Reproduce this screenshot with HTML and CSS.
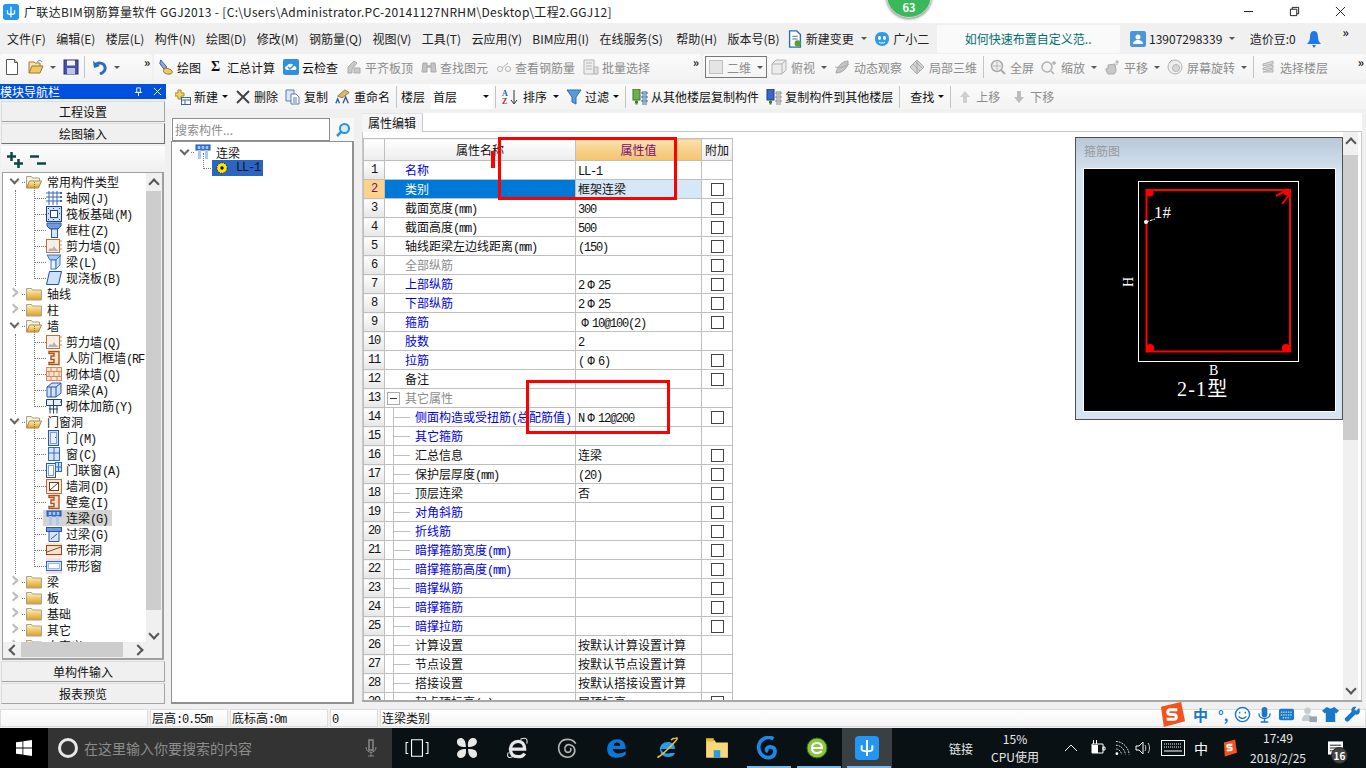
FILE: index.html
```html
<!DOCTYPE html>
<html lang="zh-CN">
<head>
<meta charset="UTF-8">
<title>广联达BIM钢筋算量软件 GGJ2013</title>
<meta name="viewport" content="width=device-width, initial-scale=1.0">
<link rel="stylesheet" href="styles.css">
</head>
<body>
<svg class="sprite" aria-hidden="true">
    <defs>
        <linearGradient id="fold" x1="0" y1="0" x2="0" y2="1"><stop offset="0" stop-color="#fff3b8"/><stop offset="1" stop-color="#dc9f22"/></linearGradient>
        <symbol id="i-folder" viewBox="0 0 16 14"><path d="M.5 3V1.5h5l1 1.5h9v10H.5z" fill="url(#fold)" stroke="#a8a090"/></symbol>
        <symbol id="i-folder-open" viewBox="0 0 16 14"><path d="M.5 13V1.5h5l1 1.5h7v3" fill="#fbf2cf" stroke="#a8a090"/><path d="M.5 13l3-7h12l-3 7z" fill="url(#fold)" stroke="#a08a50"/></symbol>
        <symbol id="i-grid" viewBox="0 0 16 16"><path d="M3 1v14M7 1v14M11 1v14M0 3h14M0 7h14M0 11h14" stroke="#3a66b8" fill="none"/><path d="M14 2h2v2h-2zM14 6h2v2h-2zM14 10h2v2h-2z" fill="#3a66b8"/></symbol>
        <symbol id="i-raft" viewBox="0 0 16 16"><rect x=".5" y=".5" width="15" height="15" fill="#cfe0f7" stroke="#1c3f86"/><rect x="4.5" y="4.5" width="7" height="7" fill="#fff" stroke="#1c3f86"/><path d="M2 2h1v1H2zM7 2h1v1H7zM13 2h1v1h-1zM2 7h1v1H2zM13 7h1v1h-1zM2 13h1v1H2zM7 13h1v1H7zM13 13h1v1h-1z" fill="#1c3f86"/></symbol>
        <symbol id="i-column" viewBox="0 0 16 16"><path d="M1 1h14v3l-3 3H4L1 4z" fill="#6f9ae0" stroke="#2b55a8"/><rect x="5.5" y="7" width="6" height="8.5" fill="#d8e6fb" stroke="#2b55a8"/></symbol>
        <symbol id="i-shear" viewBox="0 0 16 16"><rect x=".5" y="1.5" width="13" height="13" fill="#f5efe8" stroke="#c0703a"/><path d="M2 13l2-3 2 1 2-3 2 3 3 2z" fill="#b5b5b5"/><path d="M14 3h2M14 7h2M14 11h2" stroke="#e28a30"/></symbol>
        <symbol id="i-beam" viewBox="0 0 16 16"><path d="M1 1h14l-3 5H4z" fill="#a9c8f2" stroke="#3a78c8"/><path d="M5 6h5v9H5z" fill="#eaf2fd" stroke="#3a78c8"/><path d="M10 6l4-4v9l-4 4z" fill="#cfe0f7" stroke="#3a78c8"/></symbol>
        <symbol id="i-slab" viewBox="0 0 16 16"><path d="M3.5 1.5h12l-3 13H.5z" fill="#cfe2fb" stroke="#1d4fa8"/></symbol>
        <symbol id="i-jamb" viewBox="0 0 16 16"><path d="M3 1.5h10v13H3v-2h5v-3H5V6h3V3.500H3z" fill="#fbe3c8" stroke="#a85420" stroke-width="1.400"/></symbol>
        <symbol id="i-brick" viewBox="0 0 16 16"><rect x=".5" y="1.500" width="15" height="13" fill="#fbe6d6" stroke="#d98a58"/><path d="M.5 5.500h15M.5 10.500h15M5 1.500v4M11 1.500v4M3 5.500v5M8 5.500v5M13 5.500v5M5 10.500v4M11 10.500v4" stroke="#d98a58" fill="none"/></symbol>
        <symbol id="i-dark" viewBox="0 0 16 16"><path d="M1 5l5-4h9v10l-5 4H1z" fill="#cfe0f7" stroke="#2b55a8"/><path d="M1 5h9v10M10 5l5-4M5 5v10" stroke="#2b55a8" fill="none"/></symbol>
        <symbol id="i-rebar" viewBox="0 0 16 16"><path d="M.5 1.500h15v6H.5z" fill="#e6effc" stroke="#1c3f86"/><path d="M4 7.500h7v8M4 7.500v8M7.500 1.500v14M3 11h9M14 4h2" stroke="#1c3f86" fill="none"/></symbol>
        <symbol id="i-door" viewBox="0 0 16 16"><rect x="2.500" y=".5" width="10" height="15" fill="#cfe0f7" stroke="#2b55a8"/><rect x="4.500" y="2.500" width="6" height="11" fill="#eaf2fd" stroke="#7aa0e0"/><path d="M9 7h1v1H9z" fill="#1c3f86"/></symbol>
        <symbol id="i-window" viewBox="0 0 16 16"><rect x="2.500" y="1.500" width="11" height="13" fill="#d8e6fb" stroke="#2b6cd0"/><path d="M8 1.500v13M2.500 7h11" stroke="#2b6cd0"/></symbol>
        <symbol id="i-doorwin" viewBox="0 0 16 16"><rect x=".5" y="1.500" width="9" height="14" fill="#eaf2fd" stroke="#2b55a8"/><rect x="2.500" y="3.500" width="5" height="10" fill="#fff" stroke="#7aa0e0"/><rect x="9.500" y=".5" width="6" height="9" fill="#cfe0f7" stroke="#2b6cd0"/><path d="M12.500.5v9M9.500 5h6" stroke="#2b6cd0"/></symbol>
        <symbol id="i-hole" viewBox="0 0 16 16"><rect x=".5" y="1.500" width="15" height="14" fill="#f9e8dc" stroke="#c0703a"/><rect x="3.500" y="4.500" width="9" height="8" fill="#fff" stroke="#704020"/><path d="M4 12l8-7" stroke="#704020"/></symbol>
        <symbol id="i-link" viewBox="0 0 16 16"><rect x="1" y="1" width="14" height="5" fill="#4a86e0" stroke="#1d4fa8"/><path d="M3 6h3v9H3zM10 6h3v9h-3z" fill="#a9c8f2"/><path d="M4 2v3M8 2v3M12 2v3" stroke="#fff"/></symbol>
        <symbol id="i-lintel" viewBox="0 0 16 16"><rect x=".5" y="1.500" width="15" height="4" fill="#6f9ae0" stroke="#2b55a8"/><path d="M3 5.500h10v10H3z" fill="#d8e6fb" stroke="#2b55a8"/><path d="M5 13l6-5" stroke="#2b55a8"/></symbol>
        <symbol id="i-bandhole" viewBox="0 0 16 16"><rect y="1" width="16" height="14" fill="#fbe3d6"/><rect x=".5" y="3.500" width="15" height="9" fill="#f4e2cc" stroke="#8a4a20"/><path d="M1 10l14-5" stroke="#8a4a20"/></symbol>
        <symbol id="i-bandwin" viewBox="0 0 16 16"><rect width="16" height="16" fill="#fbdcd6"/><rect x=".5" y="3.500" width="15" height="9" fill="#d8e6fb" stroke="#2b6cd0"/><rect x="2.500" y="5.500" width="11" height="5" fill="#fff" stroke="#9ab8e8"/></symbol>
        <symbol id="i-new" viewBox="0 0 16 16"><path d="M2.500.5h8l3 3v12h-11z" fill="#fff" stroke="#555"/><path d="M10.500.5v3h3" fill="#ddd" stroke="#555"/></symbol>
        <symbol id="i-open" viewBox="0 0 16 16"><path d="M1 14V3h5l1 1h5v3" fill="#f6e2a6" stroke="#9a8040"/><path d="M1 14l3-7h11l-3 7z" fill="#f0c860" stroke="#9a7a30"/><path d="M9 3c2-2 4-2 5 0" fill="none" stroke="#3a78c8"/></symbol>
        <symbol id="i-save" viewBox="0 0 16 16"><rect x="1" y="1" width="14" height="14" fill="#4a52a8" stroke="#2a2f70"/><rect x="4" y="1.500" width="8" height="5" fill="#f4f4f4"/><rect x="4" y="9" width="8" height="6" fill="#bcc4e8"/></symbol>
        <symbol id="i-undo" viewBox="0 0 16 16"><path d="M3 7c2-4 9-4 10 1s-3 6-5 7" fill="none" stroke="#2b6cb8" stroke-width="3"/><path d="M1 2l1 7 6-2z" fill="#2b6cb8"/></symbol>
        <symbol id="i-draw" viewBox="0 0 18 18"><path d="M3 1l7 8-3 3-5-7z" fill="#8aa8d8" stroke="#36568c"/><path d="M8 10c3 1 7 1 8 4s-5 4-8 2-2-4 0-6z" fill="#f0c860" stroke="#7a6a30"/></symbol>
        <symbol id="i-cloud" viewBox="0 0 16 16"><rect width="16" height="16" rx="2" fill="#2f8fe0"/><path d="M4 11c-3-1-2-4 0-4 1-3 6-3 7 0 3 0 3 4 1 4z" fill="#fff"/><path d="M5 8l2 2 4-4" fill="none" stroke="#2f8fe0" stroke-width="1.500"/></symbol>
        <symbol id="i-level" viewBox="0 0 16 16"><path d="M2 14V8l6-6 3 2-5 6v4zM8 14V9h6v5z" fill="#c8c8c8" stroke="#aaa"/></symbol>
        <symbol id="i-binoc" viewBox="0 0 16 16"><path d="M2 4h4v9H1zM10 4h4l1 9h-5z" fill="#c4c4c4" stroke="#a8a8a8"/><path d="M6 6h4v3H6z" fill="#b8b8b8"/></symbol>
        <symbol id="i-look" viewBox="0 0 16 16"><circle cx="4" cy="10" r="2.500" fill="none" stroke="#b0b0b0"/><circle cx="12" cy="10" r="2.500" fill="none" stroke="#b0b0b0"/><path d="M6 9l6-5" stroke="#b0b0b0"/></symbol>
        <symbol id="i-batch" viewBox="0 0 16 16"><path d="M1 1h10v14H1z" fill="#eee" stroke="#b4b4b4"/><path d="M3 4h6M3 7h6M3 10h6M11 8h4v7h-4z" fill="#ddd" stroke="#b4b4b4"/></symbol>
        <symbol id="i-box" viewBox="0 0 16 16"><path d="M1 5l4-4h10v10l-4 4H1z" fill="#ececec" stroke="#b4b4b4"/><path d="M1 5h10v10M11 5l4-4" fill="none" stroke="#b4b4b4"/></symbol>
        <symbol id="i-orbit" viewBox="0 0 16 16"><path d="M2 14C3 8 8 2 14 2c1 6-5 12-12 12z" fill="#c4c4c4" stroke="#a8a8a8"/><path d="M1 8c4 1 9 1 14-3" fill="none" stroke="#aaa"/></symbol>
        <symbol id="i-local" viewBox="0 0 16 16"><path d="M1 8l7-7 7 7-7 7z" fill="#d4d4d4" stroke="#aaa"/><path d="M4 5l7 7M7 3l7 7M8 1v14" stroke="#aaa" fill="none"/></symbol>
        <symbol id="i-full" viewBox="0 0 16 16"><circle cx="7" cy="7" r="5.500" fill="#f0f0f0" stroke="#aaa" stroke-width="1.500"/><path d="M11 11l4 4" stroke="#aaa" stroke-width="2"/><path d="M7 3v8M3 7h8" stroke="#b8b8b8"/></symbol>
        <symbol id="i-zoom" viewBox="0 0 16 16"><circle cx="6" cy="8" r="5" fill="#f4f4f4" stroke="#b0b0b0" stroke-width="1.500"/><path d="M10 12l3 3M13 2v4M11 4h4" stroke="#b0b0b0" stroke-width="1.500"/></symbol>
        <symbol id="i-pan" viewBox="0 0 16 16"><path d="M4 15c-2-3-3-5-1-6l1 1V6l7-1 1 6c0 2-1 3-2 4z" fill="#c8c8c8" stroke="#aaa"/><path d="M13 1v5M11 3h4" stroke="#aaa"/></symbol>
        <symbol id="i-rotate" viewBox="0 0 16 16"><circle cx="8" cy="8" r="7" fill="#eee" stroke="#b4b4b4"/><circle cx="9" cy="9" r="3.500" fill="#d8d8d8" stroke="#b4b4b4"/><path d="M2 4l3-3" stroke="#a0a0a0"/></symbol>
        <symbol id="i-floor" viewBox="0 0 16 16"><path d="M3 5l10-3v3L3 7zM3 9l10-3v3L3 11zM3 13l10-3v3z" fill="#d8d8d8" stroke="#b4b4b4"/></symbol>
        <symbol id="i-add" viewBox="0 0 16 16"><path d="M3 1h3v3h3v3H6v3H3V7H0V4h3z" fill="#f2d660" stroke="#a08a30"/><rect x="6.500" y="8.500" width="9" height="7" fill="#fff" stroke="#3a66a8"/><path d="M6.500 11h9M10 11v4.500" stroke="#3a66a8"/></symbol>
        <symbol id="i-del" viewBox="0 0 16 16"><path d="M2 2l12 12M14 2L2 14" stroke="#444" stroke-width="2"/></symbol>
        <symbol id="i-copy" viewBox="0 0 16 16"><path d="M1 1h8v11H1z" fill="#dce8f8" stroke="#5a7ab0"/><path d="M6 5h5l3 3v7H6z" fill="#fff" stroke="#5a7ab0"/><path d="M8 9h4M8 11h4M8 13h4" stroke="#5a7ab0"/></symbol>
        <symbol id="i-rename" viewBox="0 0 18 18"><path d="M3 8l8-7 5 3-8 6z" fill="#d8b860" stroke="#8a7a40"/><path d="M1 16l2-5 2 5M9 16l3-7 3 7" fill="none" stroke="#2b55a8" stroke-width="1.500"/></symbol>
        <symbol id="i-sort" viewBox="0 0 16 16"><text x="0" y="7" class="sort-a">A</text><text x="0" y="15" class="sort-z">Z</text><path d="M12 1v13M9 11l3 4 3-4" fill="none" stroke="#333"/></symbol>
        <symbol id="i-filter" viewBox="0 0 16 16"><path d="M1 1h14L10 8v7l-4-2V8z" fill="#5a9be0" stroke="#2b6cb8"/></symbol>
        <symbol id="i-from" viewBox="0 0 16 16"><rect x="1" y="0" width="7" height="11" fill="#6fb04a" stroke="#3a7a20"/><path d="M3 13h3M4.500 11.500v4" stroke="#2b8a20" stroke-width="2"/><path d="M10 3h5v2h-5zM10 7h5v2h-5zM10 11h5v2h-5zM10 15h5" stroke="#3a66a8" fill="#cfe0f7"/></symbol>
        <symbol id="i-to" viewBox="0 0 16 16"><rect x="1" y="0" width="7" height="11" fill="#3a66c8" stroke="#1d3f88"/><path d="M3 13h3M4.500 11.500v4" stroke="#2b8a20" stroke-width="2"/><path d="M10 3h5v2h-5zM10 7h5v2h-5zM10 11h5v2h-5zM10 15h5" stroke="#888" fill="#eee"/></symbol>
        <symbol id="i-up" viewBox="0 0 16 16"><path d="M8 2l5 6h-3v6H6V8H3z" fill="#cfcfcf"/></symbol>
        <symbol id="i-down" viewBox="0 0 16 16"><path d="M8 14l5-6h-3V2H6v6H3z" fill="#bdbdbd"/></symbol>
        <symbol id="i-doc" viewBox="0 0 16 20"><path d="M2 1h8l4 4v14H2z" fill="#fff" stroke="#2b6cb8" stroke-width="1.500"/><path d="M5 7h6M5 10h6" stroke="#2b6cb8"/><circle cx="11" cy="15" r="3.500" fill="#5aa02c"/></symbol>
        <symbol id="i-bot" viewBox="0 0 16 16"><path d="M8 1c5 0 7 3 7 7s-3 7-7 7-7-3-7-7 2-7 7-7z" fill="#2f9be8"/><ellipse cx="5.500" cy="7" rx="1.500" ry="2" fill="#fff"/><ellipse cx="10.500" cy="7" rx="1.500" ry="2" fill="#fff"/><path d="M5 11c2 1.500 4 1.500 6 0" stroke="#fff" fill="none"/></symbol>
        <symbol id="i-user" viewBox="0 0 16 16"><rect width="16" height="16" rx="2" fill="#4a96d8"/><circle cx="8" cy="6" r="2.500" fill="#fff"/><path d="M3 13c0-3 3-4 5-4s5 1 5 4z" fill="#fff"/></symbol>
        <symbol id="i-bell" viewBox="0 0 16 18"><path d="M8 1c3 0 4 3 4 6s1 5 3 7H1c2-2 3-4 3-7s1-6 4-6z" fill="#1e78e8"/><path d="M6 15h4l-2 3z" fill="#1e78e8"/></symbol>
        <symbol id="i-app" viewBox="0 0 18 18"><rect width="18" height="18" rx="3" fill="#2196f3"/><path d="M9 3v12M5 7v3c0 2 8 2 8 0V7" fill="none" stroke="#fff" stroke-width="1.500"/></symbol>
        <symbol id="i-find" viewBox="0 0 16 16"><circle cx="9.500" cy="6.500" r="4.500" fill="#d8ecfb" stroke="#2f8fe0" stroke-width="2"/><path d="M6 10l-4 4" stroke="#2f8fe0" stroke-width="2.500"/></symbol>
        <symbol id="i-element" viewBox="0 0 14 14"><circle cx="7" cy="7" r="6" fill="#ffe800" stroke="#111" stroke-dasharray="1.500 1.500"/><circle cx="7" cy="7" r="2" fill="#111"/></symbol>
    </defs>
</svg>

<div class="titlebar">
    <svg class="ic-app" viewBox="0 0 18 18"><use href="#i-app"/></svg>
    <span class="title-text">广联达BIM钢筋算量软件 GGJ2013 - [C:\Users\Administrator.PC-20141127NRHM\Desktop\工程2.GGJ12]</span>
    <div class="win-btns">
        <svg viewBox="0 0 12 12"><path d="M1 6h10" stroke="#111"/></svg>
        <svg viewBox="0 0 12 12"><path d="M1.500 3.500h7v7h-7zM3.500 3.500v-2h7v7h-2" fill="none" stroke="#111"/></svg>
        <svg viewBox="0 0 12 12"><path d="M1 1l10 10M11 1L1 11" stroke="#111"/></svg>
    </div>
</div>

<div class="menubar">
    <span>文件(F)</span><span>编辑(E)</span><span>楼层(L)</span><span>构件(N)</span><span>绘图(D)</span><span>修改(M)</span><span>钢筋量(Q)</span><span>视图(V)</span><span>工具(T)</span><span>云应用(Y)</span><span>BIM应用(I)</span><span>在线服务(S)</span><span class="menu-help">帮助(H)</span><span>版本号(B)</span>
    <span class="menu-tool menu-change"><svg class="ic" viewBox="0 0 16 20"><use href="#i-doc"/></svg>新建变更<i class="caret"></i></span>
    <span class="menu-tool menu-bot"><svg class="ic" viewBox="0 0 16 16"><use href="#i-bot"/></svg>广小二</span>
    <span class="banner">如何快速布置自定义范..</span>
    <span class="menu-tool user"><svg class="ic" viewBox="0 0 16 16"><use href="#i-user"/></svg>13907298339<i class="caret"></i></span>
    <span class="beans">造价豆:0</span>
    <svg class="ic bell" viewBox="0 0 16 18"><use href="#i-bell"/></svg>
    <b class="more">»</b>
</div>

<div class="toolbar">
    <div class="tb-sec sec-file">
        <svg class="ic"><use href="#i-new"/></svg>
        <svg class="ic"><use href="#i-open"/></svg><i class="caret"></i>
        <svg class="ic"><use href="#i-save"/></svg>
        <i class="sep"></i>
        <svg class="ic"><use href="#i-undo"/></svg><i class="caret"></i>
        <b class="more">»</b>
    </div>
    <div class="tb-sec sec-draw">
        <span class="tool"><svg class="ic"><use href="#i-draw"/></svg>绘图</span>
        <span class="tool"><b class="sigma">Σ</b>汇总计算</span>
        <span class="tool"><svg class="ic"><use href="#i-cloud"/></svg>云检查</span>
        <span class="tool off"><svg class="ic"><use href="#i-level"/></svg>平齐板顶</span>
        <span class="tool off"><svg class="ic"><use href="#i-binoc"/></svg>查找图元</span>
        <span class="tool off"><svg class="ic"><use href="#i-look"/></svg>查看钢筋量</span>
        <span class="tool off"><svg class="ic"><use href="#i-batch"/></svg>批量选择</span>
        <b class="more">»</b>
    </div>
    <div class="tb-sec sec-view">
        <span class="tool off view-box"><i class="view-sq"></i>二维<i class="caret"></i></span>
        <span class="tool off"><svg class="ic"><use href="#i-box"/></svg>俯视<i class="caret"></i></span>
        <span class="tool off"><svg class="ic"><use href="#i-orbit"/></svg>动态观察</span>
        <span class="tool off"><svg class="ic"><use href="#i-local"/></svg>局部三维</span>
        <i class="sep"></i>
        <span class="tool off"><svg class="ic"><use href="#i-full"/></svg>全屏</span>
        <span class="tool off"><svg class="ic"><use href="#i-zoom"/></svg>缩放<i class="caret"></i></span>
        <span class="tool off"><svg class="ic"><use href="#i-pan"/></svg>平移<i class="caret"></i></span>
        <span class="tool off"><svg class="ic"><use href="#i-rotate"/></svg>屏幕旋转<i class="caret"></i></span>
        <i class="sep"></i>
        <span class="tool off"><svg class="ic"><use href="#i-floor"/></svg>选择楼层</span>
        <b class="more">»</b>
    </div>
</div>

<div class="workspace">
    <div class="nav">
        <div class="nav-title"><span>模块导航栏</span>
            <svg viewBox="0 0 10 10"><path d="M3 1h4v5H3zM1 6h8M5 6v4" fill="none" stroke="#fff"/></svg>
            <svg viewBox="0 0 10 10"><path d="M1 1l8 8M9 1L1 9" stroke="#fff"/></svg>
        </div>
        <div class="nav-btn first">工程设置</div>
        <div class="nav-btn active">绘图输入</div>
        <div class="nav-tools">
            <svg viewBox="0 0 16 16"><path d="M4.500 0v9M0 4.500h9M11.500 7v9M7 11.500h9" stroke="#0a4a44" stroke-width="2.500"/></svg>
            <svg viewBox="0 0 16 16"><path d="M0 4.500h9M7 11.500h9" stroke="#0a4a44" stroke-width="2.500"/></svg>
        </div>
        <div class="nav-tree">
            <div class="tree-list">
                <div class="node"><i class="exp open"></i><svg class="fold"><use href="#i-folder-open"/></svg>常用构件类型</div>
                <div class="kids">
                    <div class="kid"><svg class="ic"><use href="#i-grid"/></svg>轴网<span class="m">(J)</span></div>
                    <div class="kid"><svg class="ic"><use href="#i-raft"/></svg>筏板基础<span class="m">(M)</span></div>
                    <div class="kid"><svg class="ic"><use href="#i-column"/></svg>框柱<span class="m">(Z)</span></div>
                    <div class="kid"><svg class="ic"><use href="#i-shear"/></svg>剪力墙<span class="m">(Q)</span></div>
                    <div class="kid"><svg class="ic"><use href="#i-beam"/></svg>梁<span class="m">(L)</span></div>
                    <div class="kid"><svg class="ic"><use href="#i-slab"/></svg>现浇板<span class="m">(B)</span></div>
                </div>
                <div class="node"><i class="exp"></i><svg class="fold"><use href="#i-folder"/></svg>轴线</div>
                <div class="node"><i class="exp"></i><svg class="fold"><use href="#i-folder"/></svg>柱</div>
                <div class="node"><i class="exp open"></i><svg class="fold"><use href="#i-folder-open"/></svg>墙</div>
                <div class="kids">
                    <div class="kid"><svg class="ic"><use href="#i-shear"/></svg>剪力墙<span class="m">(Q)</span></div>
                    <div class="kid"><svg class="ic"><use href="#i-jamb"/></svg>人防门框墙<span class="m">(RF)</span></div>
                    <div class="kid"><svg class="ic"><use href="#i-brick"/></svg>砌体墙<span class="m">(Q)</span></div>
                    <div class="kid"><svg class="ic"><use href="#i-dark"/></svg>暗梁<span class="m">(A)</span></div>
                    <div class="kid"><svg class="ic"><use href="#i-rebar"/></svg>砌体加筋<span class="m">(Y)</span></div>
                </div>
                <div class="node"><i class="exp open"></i><svg class="fold"><use href="#i-folder-open"/></svg>门窗洞</div>
                <div class="kids">
                    <div class="kid"><svg class="ic"><use href="#i-door"/></svg>门<span class="m">(M)</span></div>
                    <div class="kid"><svg class="ic"><use href="#i-window"/></svg>窗<span class="m">(C)</span></div>
                    <div class="kid"><svg class="ic"><use href="#i-doorwin"/></svg>门联窗<span class="m">(A)</span></div>
                    <div class="kid"><svg class="ic"><use href="#i-hole"/></svg>墙洞<span class="m">(D)</span></div>
                    <div class="kid"><svg class="ic"><use href="#i-jamb"/></svg>壁龛<span class="m">(I)</span></div>
                    <div class="kid current"><svg class="ic"><use href="#i-link"/></svg><span class="cur-text">连梁<span class="m">(G)</span></span></div>
                    <div class="kid"><svg class="ic"><use href="#i-lintel"/></svg>过梁<span class="m">(G)</span></div>
                    <div class="kid"><svg class="ic"><use href="#i-bandhole"/></svg>带形洞</div>
                    <div class="kid"><svg class="ic"><use href="#i-bandwin"/></svg>带形窗</div>
                </div>
                <div class="node"><i class="exp"></i><svg class="fold"><use href="#i-folder"/></svg>梁</div>
                <div class="node"><i class="exp"></i><svg class="fold"><use href="#i-folder"/></svg>板</div>
                <div class="node"><i class="exp"></i><svg class="fold"><use href="#i-folder"/></svg>基础</div>
                <div class="node"><i class="exp"></i><svg class="fold"><use href="#i-folder"/></svg>其它</div>
                <div class="node"><i class="exp"></i><svg class="fold"><use href="#i-folder"/></svg>自定义</div>
            </div>
            <div class="vscroll tree-v"><i class="arr up"></i><i class="thumb"></i><i class="arr dn"></i></div>
            <div class="hscroll"><i class="arr lf"></i><i class="thumb"></i><i class="arr rt"></i></div>
        </div>
        <div class="nav-btn">单构件输入</div>
        <div class="nav-btn">报表预览</div>
    </div>

    <div class="main">
        <div class="toolbar2">
            <span class="tool"><svg class="ic"><use href="#i-add"/></svg>新建<i class="caret dark"></i></span>
            <span class="tool"><svg class="ic"><use href="#i-del"/></svg>删除</span>
            <span class="tool"><svg class="ic"><use href="#i-copy"/></svg>复制</span>
            <span class="tool"><svg class="ic"><use href="#i-rename"/></svg>重命名</span>
            <i class="sep"></i>
            <span class="floor-label">楼层</span>
            <span class="floor-combo">首层<i class="caret dark"></i></span>
            <i class="sep"></i>
            <span class="tool tool-sort"><svg class="ic"><use href="#i-sort"/></svg>排序<i class="caret dark"></i></span>
            <span class="tool"><svg class="ic"><use href="#i-filter"/></svg>过滤<i class="caret dark"></i></span>
            <i class="sep"></i>
            <span class="tool"><svg class="ic"><use href="#i-from"/></svg>从其他楼层复制构件</span>
            <span class="tool"><svg class="ic"><use href="#i-to"/></svg>复制构件到其他楼层</span>
            <i class="sep"></i>
            <span class="tool tool-find">查找<i class="caret dark"></i></span>
            <i class="sep"></i>
            <span class="tool off"><svg class="ic"><use href="#i-up"/></svg>上移</span>
            <span class="tool off tool-down"><svg class="ic"><use href="#i-down"/></svg>下移</span>
        </div>
        <div class="panes">
            <div class="tree-pane">
                <div class="search">
                    <span class="search-input">搜索构件...</span>
                    <svg class="ic" viewBox="0 0 16 16"><use href="#i-find"/></svg>
                </div>
                <div class="comp-tree">
                    <div class="comp-root"><i class="exp open"></i><svg class="ic"><use href="#i-link"/></svg>连梁</div>
                    <div class="comp-leaf"><span class="comp-sel"><svg viewBox="0 0 14 14"><use href="#i-element"/></svg><span class="m">LL-1</span></span></div>
                </div>
            </div>
            <div class="prop-pane">
                <div class="tabs"><span class="tab">属性编辑</span></div>
                <div class="prop-body">
                    <div class="prop-content">
                        <table class="prop-table">
                            <colgroup><col class="c-no"><col class="c-name"><col class="c-val"><col class="c-add"></colgroup>
                            <thead><tr><th></th><th>属性名称</th><th class="th-val">属性值</th><th>附加</th></tr></thead>
                            <tbody>
                                <tr><td class="no">1</td><td class="blue">名称</td><td><span class="m">LL-1</span></td><td></td></tr>
                                <tr class="sel"><td class="no">2</td><td class="blue">类别</td><td>框架连梁</td><td><i class="chk"></i></td></tr>
                                <tr><td class="no">3</td><td>截面宽度<span class="m">(mm)</span></td><td><span class="m">300</span></td><td><i class="chk"></i></td></tr>
                                <tr><td class="no">4</td><td>截面高度<span class="m">(mm)</span></td><td><span class="m">500</span></td><td><i class="chk"></i></td></tr>
                                <tr><td class="no">5</td><td>轴线距梁左边线距离<span class="m">(mm)</span></td><td><span class="m">(150)</span></td><td><i class="chk"></i></td></tr>
                                <tr><td class="no">6</td><td class="gray">全部纵筋</td><td></td><td><i class="chk"></i></td></tr>
                                <tr><td class="no">7</td><td class="blue">上部纵筋</td><td><span class="m">2<b class="bar">Φ</b>25</span></td><td><i class="chk"></i></td></tr>
                                <tr><td class="no">8</td><td class="blue">下部纵筋</td><td><span class="m">2<b class="bar">Φ</b>25</span></td><td><i class="chk"></i></td></tr>
                                <tr><td class="no">9</td><td class="blue">箍筋</td><td><span class="m"><b class="bar">Φ</b>10@100(2)</span></td><td><i class="chk"></i></td></tr>
                                <tr><td class="no">10</td><td class="blue">肢数</td><td><span class="m">2</span></td><td></td></tr>
                                <tr><td class="no">11</td><td class="blue">拉筋</td><td><span class="m">(<b class="bar">Φ</b>6)</span></td><td><i class="chk"></i></td></tr>
                                <tr><td class="no">12</td><td>备注</td><td></td><td><i class="chk"></i></td></tr>
                                <tr><td class="no">13</td><td class="gray group"><i class="minus"></i>其它属性</td><td></td><td></td></tr>
                                <tr><td class="no">14</td><td class="blue child">侧面构造或受扭筋<span class="m">(</span>总配筋值<span class="m">)</span></td><td><span class="m">N<b class="bar">Φ</b>12@200</span></td><td><i class="chk"></i></td></tr>
                                <tr><td class="no">15</td><td class="blue child">其它箍筋</td><td></td><td></td></tr>
                                <tr><td class="no">16</td><td class="child">汇总信息</td><td>连梁</td><td><i class="chk"></i></td></tr>
                                <tr><td class="no">17</td><td class="child">保护层厚度<span class="m">(mm)</span></td><td><span class="m">(20)</span></td><td><i class="chk"></i></td></tr>
                                <tr><td class="no">18</td><td class="child">顶层连梁</td><td>否</td><td><i class="chk"></i></td></tr>
                                <tr><td class="no">19</td><td class="blue child">对角斜筋</td><td></td><td><i class="chk"></i></td></tr>
                                <tr><td class="no">20</td><td class="blue child">折线筋</td><td></td><td><i class="chk"></i></td></tr>
                                <tr><td class="no">21</td><td class="blue child">暗撑箍筋宽度<span class="m">(mm)</span></td><td></td><td><i class="chk"></i></td></tr>
                                <tr><td class="no">22</td><td class="blue child">暗撑箍筋高度<span class="m">(mm)</span></td><td></td><td><i class="chk"></i></td></tr>
                                <tr><td class="no">23</td><td class="blue child">暗撑纵筋</td><td></td><td><i class="chk"></i></td></tr>
                                <tr><td class="no">24</td><td class="blue child">暗撑箍筋</td><td></td><td><i class="chk"></i></td></tr>
                                <tr><td class="no">25</td><td class="blue child">暗撑拉筋</td><td></td><td><i class="chk"></i></td></tr>
                                <tr><td class="no">26</td><td class="child">计算设置</td><td>按默认计算设置计算</td><td></td></tr>
                                <tr><td class="no">27</td><td class="child">节点设置</td><td>按默认节点设置计算</td><td></td></tr>
                                <tr><td class="no">28</td><td class="child">搭接设置</td><td>按默认搭接设置计算</td><td></td></tr>
                                <tr><td class="no">29</td><td class="child">起点顶标高<span class="m">(m)</span></td><td>层顶标高</td><td><i class="chk"></i></td></tr>
                            </tbody>
                        </table>
                        <div class="stirrup">
                            <div class="stirrup-title">箍筋图</div>
                            <svg class="stirrup-draw" viewBox="0 0 251 242">
                                <rect width="251" height="242" fill="#000"/>
                                <rect x="54.500" y="12.500" width="160" height="180" fill="none" stroke="#fff"/>
                                <rect x="62.500" y="21" width="143.500" height="161.500" fill="none" stroke="#f00" stroke-width="2"/>
                                <circle cx="66" cy="24" r="3.500" fill="#f00"/>
                                <circle cx="66" cy="179" r="4" fill="#f00"/>
                                <circle cx="202" cy="179" r="4" fill="#f00"/>
                                <circle cx="203" cy="23" r="3.500" fill="#f00"/>
                                <path d="M203 21L192 27M205 26L198 35" fill="none" stroke="#f00" stroke-width="2"/>
                                <path d="M62 53l9-3" stroke="#fff" stroke-dasharray="3 1"/>
                                <circle cx="62" cy="53" r="2" fill="#fff"/>
                                <text x="70" y="49" class="draw-text big">1#</text>
                                <text x="0" y="0" class="draw-text" transform="translate(49 118) rotate(-90)">H</text>
                                <text x="125" y="206" class="draw-text">B</text>
                                <text x="93" y="227" class="draw-title">2-1型</text>
                            </svg>
                        </div>
                    </div>
                    <div class="vscroll prop-v"><i class="arr up"></i><i class="thumb"></i><i class="arr dn"></i></div>
                </div>
            </div>
        </div>
    </div>
</div>

<div class="statusbar">
    <div class="cell c1"></div>
    <div class="cell c2">层高<span class="m">:0.55m</span></div>
    <div class="cell c3">底标高<span class="m">:0m</span></div>
    <div class="cell c4"><span class="m">0</span></div>
    <div class="cell c5">连梁类别</div>
</div>

<div class="taskbar">
    <div class="start"><svg viewBox="0 0 16 16"><path d="M0 2.300L6.500 1.400v6.200H0zM7.300 1.300L16 0v7.600H7.300zM0 8.400h6.500v6.200L0 13.700zM7.300 8.400H16V16l-8.700-1.300z" fill="#fff"/></svg></div>
    <div class="task-search">
        <svg class="cortana" viewBox="0 0 22 22"><circle cx="11" cy="11" r="8.500" fill="none" stroke="#e8e8e8" stroke-width="3"/></svg>
        <span>在这里输入你要搜索的内容</span>
        <svg class="task-mic" viewBox="0 0 12 18"><path d="M4 1h4v10H4z" fill="none" stroke="#8a8a8a" stroke-width="1.500"/><path d="M1 8c0 7 10 7 10 0M6 13v4M3 17h6" fill="none" stroke="#8a8a8a"/></svg>
    </div>
    <div class="task-apps">
        <div class="task"><svg viewBox="0 0 22 18"><path d="M6 1.500h10v15H6zM3 4H1v10h2M19 4h2v10h-2" fill="none" stroke="#fff"/></svg></div>
        <div class="task"><svg viewBox="0 0 22 22"><path d="M10 10C3 11 1 7 2 4s8-4 8 6zM12 10c-1-7 3-9 6-8s4 8-6 8zM12 12c7-1 9 3 8 6s-8 4-8-6zM10 12c1 7-3 9-6 8s-4-8 6-8z" fill="#e8e8e8"/></svg></div>
        <div class="task"><svg viewBox="0 0 22 22"><path d="M4 12h14c0-5-3-7-6-7-4 0-7 3-7 7 0 5 3 7 7 7 3 0 5-1 6-3" fill="none" stroke="#e8e8e8" stroke-width="3"/><path d="M3 15C1 20 4 21 9 18M14 3c5-2 7-1 6 4" fill="none" stroke="#e8e8e8"/></svg></div>
        <div class="task"><svg viewBox="0 0 22 22"><path d="M19 7C16 2 8 2 5 6s-2 11 4 13 10-3 9-7-6-5-8-3-1 6 2 6 3-3 2-4" fill="none" stroke="#b4b4b4" stroke-width="1.500"/></svg></div>
        <div class="task"><svg viewBox="0 0 22 22"><path d="M3 12h16c0-6-3-9-8-9-5 0-9 4-9 9 0 6 4 8 8 8 4 0 7-1 9-3v-3c-5 3-11 3-12-2z" fill="#0a78d7"/><path d="M8 9h6c0-2-1-3-3-3s-3 1-3 3z" fill="#0a1114"/></svg></div>
        <div class="task"><svg viewBox="0 0 24 24"><path d="M6 13h14c0-5-3-7-7-7-5 0-8 3-8 7 0 5 3 8 8 8 3 0 6-1 7-4h-5c-2 1-7 1-9-4z" fill="#2a9be8"/><path d="M4 20C0 24 8 18 13 13s12-12 8-11c-2 0-4 1-5 2" fill="none" stroke="#f2c530" stroke-width="1.500"/></svg></div>
        <div class="task"><svg viewBox="0 0 22 20"><path d="M1 3h8l1 2h11v14H1z" fill="#f8d878"/><path d="M1 1h7v3H1z" fill="#e8b838"/><path d="M8 12h6v7H8z" fill="#2b9be0"/></svg></div>
        <div class="task pinned"><svg viewBox="0 0 22 26"><path d="M18 3C11-1 2 4 2 12s7 13 13 11 6-10 1-11-7 3-4 5" fill="none" stroke="#1e88e8" stroke-width="4"/></svg></div>
        <div class="task pinned"><svg viewBox="0 0 24 24"><circle cx="12" cy="12" r="10" fill="#8cc63f" stroke="#2b6a20"/><path d="M7 12h10c0-3-2-5-5-5s-5 2-5 5 2 5 5 5c2 0 4-1 5-2" fill="none" stroke="#fff" stroke-width="2"/></svg></div>
        <div class="task pinned active"><svg viewBox="0 0 18 18"><use href="#i-app"/></svg></div>
    </div>
    <div class="tray">
        <span class="tray-link">链接</span>
        <span class="tray-cpu">15%<br>CPU使用</span>
        <svg class="tray-ic tray-up" viewBox="0 0 14 10"><path d="M1 8l6-6 6 6" fill="none" stroke="#fff"/></svg>
        <svg class="tray-ic tray-bat" viewBox="0 0 18 16"><path d="M4 4h11v9H4zM15 7h2v3h-2z" fill="none" stroke="#fff"/><path d="M4 5h6v8H4zM5 0h1v4H5zM8 0h1v4H8z" fill="#fff"/></svg>
        <svg class="tray-ic tray-wifi" viewBox="0 0 16 16"><path d="M1 9c3 0 6 3 6 6M1 5c5 0 10 5 10 10M1 1c7 0 14 7 14 14" fill="none" stroke="#ddd" stroke-dasharray="2 1"/><circle cx="2" cy="14" r="1.500" fill="#fff"/></svg>
        <svg class="tray-ic tray-vol" viewBox="0 0 16 16"><path d="M1 6h3l4-4v12l-4-4H1z" fill="none" stroke="#fff"/><path d="M10 5c1 2 1 4 0 6M13 3c2 3 2 7 0 10" fill="none" stroke="#ccc"/></svg>
        <svg class="tray-ic tray-kbd" viewBox="0 0 24 16"><rect x=".5" y=".5" width="23" height="15" fill="none" stroke="#fff"/><path d="M3 4h18M3 7h18" stroke="#fff" stroke-dasharray="1 1"/><path d="M3 11h18" stroke="#fff"/></svg>
        <span class="tray-ime">中</span>
        <svg class="tray-ic tray-s" viewBox="0 0 16 18"><path d="M2 3l12-3 2 14-13 4z" fill="#f0531c"/><path d="M11 5.500H7c-2 0-2 3 0 3h2c2 0 2 3 0 3H5" fill="none" stroke="#fff" stroke-width="2"/></svg>
        <span class="tray-clock">17:49<br>2018/2/25</span>
        <span class="tray-note"><svg viewBox="0 0 16 14"><rect width="16" height="14" fill="#fff"/><path d="M2 4h12M2 7h12M2 10h12" stroke="#0a1114"/></svg><b>16</b></span>
    </div>
</div>

<!-- 叠在界面上的标注和浮层 -->
<div class="mark mark-a"></div>
<div class="mark mark-b"></div>
<div class="mark mark-c"></div>
<div class="badge"><span>63</span></div>
<div class="sogou">
    <svg class="sg-logo" viewBox="0 0 26 26"><path d="M1 5L22 0l4 20-22 6z" fill="#f0531c"/><path d="M18 8h-7c-4 0-4 5 0 5h3c4 0 4 5 0 5H7" fill="none" stroke="#fff" stroke-width="3"/></svg>
    <span class="sg-zh">中</span>
    <span class="sg-punc">°,</span>
    <svg viewBox="0 0 18 18"><circle cx="9" cy="9" r="7.500" fill="#fff" stroke="#1a78c8" stroke-width="1.500"/><path d="M6 6v2M12 6v2M5 11c2 3 6 3 8 0" fill="none" stroke="#1a78c8" stroke-width="1.500"/></svg>
    <svg viewBox="0 0 18 18"><rect x="6" y="1" width="6" height="11" rx="3" fill="#1a78c8"/><path d="M3 8c0 7 12 7 12 0M9 13v4M5 17h8" fill="none" stroke="#1a78c8" stroke-width="1.500"/></svg>
    <svg viewBox="0 0 18 18"><rect x="1" y="3" width="16" height="12" rx="2" fill="#1a78c8"/><path d="M3 6.500h12M3 9.500h12M5 12.500h8" stroke="#fff" stroke-dasharray="1.500 1"/></svg>
    <svg viewBox="0 0 18 18"><circle cx="8" cy="5" r="3.500" fill="#c4ccd4"/><path d="M2 15c0-4 3-6 6-6s4 2 4 3v4H2z" fill="#c4ccd4"/><rect x="10" y="11" width="8" height="6" fill="#98a4b0"/></svg>
    <svg viewBox="0 0 18 18"><path d="M5 1l4 2 4-2 5 4-3 3-1-1v10H4V7L3 8 0 5z" fill="#1a78c8"/></svg>
    <svg viewBox="0 0 18 18"><path d="M16 2l-3 3-2-1 2-3c-3-1-6 1-5 5L1 13c-1 2 2 5 4 3l7-7c4 1 6-3 4-7z" fill="#1a78c8"/></svg>
</div>
</body>
</html>
```

FILE: styles.css
```css
* {
    box-sizing: border-box;
}

html, body {
    margin: 0;
    height: 100%;
}

body {
    position: relative;
    width: 1366px;
    height: 768px;
    overflow: hidden;
    display: flex;
    flex-direction: column;
    background-color: #f0f0f0;
    color: #111;
    font-family: "Noto Sans CJK SC", "Liberation Sans", sans-serif;
    font-size: 12px;
}

i, b {
    font-style: normal;
}

.sprite {
    display: block;
    width: 0;
    height: 0;
}

/* 半角等宽的西文部分 */
.m {
    font-family: "Liberation Mono", monospace;
    font-size: 12px;
    letter-spacing: -1.2px;
    line-height: 1;
}

.ic {
    width: 16px;
    height: 16px;
    flex: none;
}

.caret {
    display: inline-block;
    flex: none;
    width: 0;
    height: 0;
    border-left: 3px solid transparent;
    border-right: 3px solid transparent;
    border-top: 3px solid #555;
    margin-left: 2px;
}

.caret.dark {
    border-top-color: #111;
    margin-left: 1px;
}

.more {
    font-size: 12px;
    font-weight: bold;
    color: #222;
    line-height: 12px;
    align-self: flex-start;
    margin-top: 2px;
}

.sep {
    flex: none;
    width: 1px;
    height: 22px;
    background-color: #c4c4c4;
}

/* 标题栏 */
.titlebar {
    flex: none;
    height: 23px;
    display: flex;
    align-items: center;
    background-color: #fff;
    padding-left: 3px;
}

.ic-app {
    width: 16px;
    height: 16px;
    margin-right: 5px;
}

.title-text {
    color: #222;
    letter-spacing: 0.32px;
}

.win-btns {
    margin-left: auto;
    display: flex;
    align-items: center;
    gap: 35px;
    padding-right: 20px;
}

.win-btns svg {
    width: 11px;
    height: 11px;
}

/* 菜单栏 */
.menubar {
    flex: none;
    height: 31px;
    display: flex;
    align-items: center;
    gap: 10.4px;
    padding-left: 7px;
    color: #222;
}

.menu-help {
    margin-left: 3px;
}

.menu-change {
    margin-left: -3px;
}

.menu-bot {
    margin-left: -3px;
}

.menu-tool {
    display: flex;
    align-items: center;
    gap: 3px;
}

.menu-tool .ic {
    width: 16px;
    height: 18px;
}

.menu-tool .caret {
    margin-left: 4px;
}

.banner {
    width: 183px;
    height: 28px;
    margin-left: -3px;
    background-color: #fafafa;
    color: #006e6e;
    text-align: center;
    line-height: 28px;
    border-radius: 2px;
}

.beans {
    margin-left: 4px;
}

.bell {
    width: 16px;
    height: 18px;
}

.menubar .more {
    margin-left: 10px;
    align-self: flex-start;
    margin-top: 3px;
}

/* 工具栏 */
.toolbar {
    flex: none;
    height: 30px;
    display: flex;
    gap: 2px;
}

.tb-sec {
    height: 26px;
    display: flex;
    align-items: center;
    background-image: linear-gradient(#fbfbfb, #f3f3f3);
    border-radius: 3px;
}

.sec-file {
    width: 152px;
    padding-left: 4px;
    gap: 0;
}

.sec-file .ic + .ic {
    margin-left: 8px;
}

.sec-file .caret {
    margin: 0 7px 0 6px;
}

.sec-file .sep {
    margin: 0 7px 0 5px;
}

.sec-file .more {
    margin-left: 17px;
}

.sec-draw {
    width: 547px;
    padding-left: 4px;
    gap: 8px;
}

.sec-draw .more {
    margin-left: auto;
    margin-right: 2px;
}

.sec-view {
    flex: 1;
    padding-left: 2px;
    gap: 7px;
}

.sec-view .tool {
    gap: 4px;
}

.sec-view .sep {
    margin: 0 -1px;
}

.sec-view .more {
    margin-left: auto;
    margin-right: 2px;
}

.tool {
    display: flex;
    align-items: center;
    flex: none;
    gap: 3px;
    color: #111;
    white-space: nowrap;
}

.tool.off {
    color: #8c8c8c;
}

.sigma {
    font-family: "Liberation Serif", serif;
    font-size: 14px;
    width: 13px;
    margin-left: 2px;
}

.view-box {
    width: 62px;
    height: 22px;
    margin-right: -3px;
    border: 1px solid #777;
    padding-left: 3px;
}

.view-box .caret {
    margin-left: 2px;
}

.view-sq {
    width: 14px;
    height: 14px;
    background-color: #e4e4e4;
    border: 1px solid #c0c0c0;
}

/* 主体 */
.workspace {
    flex: 1;
    min-height: 0;
    display: flex;
}

.nav {
    flex: none;
    width: 166px;
    display: flex;
    flex-direction: column;
    padding-bottom: 4px;
}

.nav-title {
    flex: none;
    height: 15px;
    display: flex;
    align-items: center;
    background-color: #0050e0;
    color: #fff;
    font-size: 12px;
    line-height: 15px;
    padding-right: 4px;
    gap: 10px;
}

.nav-title span {
    margin-right: auto;
}

.nav-title svg {
    width: 9px;
    height: 9px;
}

.nav-btn {
    flex: none;
    height: 21px;
    margin: 1px 1px 0;
    line-height: 19px;
    text-align: center;
    background-color: #f0f0f0;
    border: 1px solid #a4a4a4;
    border-top-color: #ddd;
    border-left-color: #ddd;
}

.nav-btn.first {
    margin-top: 2px;
}

.nav-btn.active {
    border-right-color: #707070;
    border-bottom-color: #707070;
}

.nav-tools {
    flex: none;
    height: 26px;
    margin: 2px 1px 0;
    padding: 6px 6px 0;
    display: flex;
    gap: 7px;
    background-image: linear-gradient(#fdfdfd, #f0f0f0);
}

.nav-tools svg {
    width: 16px;
    height: 16px;
}

.nav-tree {
    flex: 1;
    min-height: 0;
    margin: 0 2px;
    display: grid;
    grid-template-columns: 143px 15px;
    grid-template-rows: 469px 15px;
    border: 1px solid #a0a0a0;
    border-right-width: 2px;
    border-bottom-width: 2px;
    background-color: #f0f0f0;
}

.tree-list {
    overflow: hidden;
    padding-top: 1px;
    background-color: #fff;
    color: #111;
    white-space: nowrap;
}

.node {
    position: relative;
    display: flex;
    align-items: center;
    height: 16px;
    padding-left: 23px;
    line-height: 16px;
}

.node .fold {
    width: 16px;
    height: 14px;
    margin-right: 5px;
    flex: none;
}

.exp {
    position: absolute;
    left: 7px;
    top: 3px;
    width: 7px;
    height: 7px;
    border-right: 2px solid #bbb;
    border-bottom: 2px solid #bbb;
    transform: rotate(-45deg);
}

.exp.open {
    top: 2px;
    left: 8px;
    border-color: #666;
    transform: rotate(45deg);
}

.node::after, .comp-root::after {
    content: "";
    width: 3px;
    position: absolute;
    left: 19px;
    top: 8px;
    border-top: 1px dotted #777;
}

.kids {
    margin-left: 12px;
    border-left: 1px dotted #777;
    padding-left: 18px;
}

.kid {
    position: relative;
    display: block;
    height: 16px;
    padding-left: 12px;
    line-height: 16px;
}

.kid .ic {
    margin-right: 4px;
    vertical-align: -3px;
}

.kid::before {
    content: "";
    position: absolute;
    left: 0;
    top: -8px;
    width: 11px;
    height: 16px;
    border-left: 1px dotted #777;
    border-bottom: 1px dotted #777;
}

.current::after {
    content: "";
    position: absolute;
    z-index: 0;
    left: 9px;
    top: 0;
    width: 69px;
    height: 16px;
    background-color: #d4d4d4;
}

.current .ic, .cur-text {
    position: relative;
    z-index: 1;
}

.vscroll {
    display: flex;
    flex-direction: column;
    background-color: #f0f0f0;
}

.hscroll {
    grid-column: 1 / 3;
    display: flex;
    align-items: stretch;
    background-color: #f0f0f0;
    padding-right: 15px;
}

.thumb {
    display: block;
    background-color: #cdcdcd;
}

.tree-v .thumb {
    height: 419px;
    margin-top: 18px;
}

.hscroll .thumb {
    width: 102px;
    margin-left: 18px;
}

.arr {
    display: block;
    position: relative;
    flex: none;
}

.arr::before {
    content: "";
    position: absolute;
    width: 6px;
    height: 6px;
    border-left: 2px solid #555;
    border-top: 2px solid #555;
}

.vscroll .arr {
    height: 0;
}

.arr.up::before {
    left: 4px;
    top: 7px;
    transform: rotate(45deg);
}

.arr.dn::before {
    left: 4px;
    top: 20px;
    transform: rotate(225deg);
}

.hscroll .arr {
    width: 0;
}

.arr.lf::before {
    left: 7px;
    top: 4px;
    transform: rotate(-45deg);
}

.arr.rt::before {
    left: 11px;
    top: 4px;
    transform: rotate(135deg);
}

/* 右侧 */
.main {
    flex: 1;
    min-width: 0;
    display: flex;
    flex-direction: column;
}

.toolbar2 {
    flex: none;
    height: 25px;
    display: flex;
    align-items: center;
    gap: 7px;
    padding-left: 9px;
    background-image: linear-gradient(#fbfbfb, #f3f3f3);
}

.toolbar2 .sep {
    margin: 0 -1px;
}

.tool-sort {
    gap: 5px;
}

.tool-find {
    margin-left: 4px;
}

.tool-down {
    margin-left: 4px;
}

.floor-label {
    margin-left: -2px;
}

.floor-combo {
    width: 62px;
    height: 24px;
    margin-left: -1px;
    margin-right: -4px;
    display: flex;
    align-items: center;
    padding-left: 2px;
    background-color: #fff;
}

.floor-combo .caret {
    margin-left: auto;
    margin-right: 4px;
}

.panes {
    flex: 1;
    min-height: 0;
    display: flex;
    padding: 0 4px 4px 5px;
    gap: 8px;
}

.tree-pane {
    flex: none;
    width: 183px;
    display: flex;
    flex-direction: column;
    margin-top: 9px;
}

.search {
    flex: none;
    height: 23px;
    display: flex;
    align-items: center;
    background-color: #f8f8f8;
}

.search .ic {
    margin-left: 5px;
}

.search-input {
    width: 158px;
    height: 23px;
    margin-left: 1px;
    border: 1px solid #8c8c8c;
    background-color: #fff;
    color: #8c8c8c;
    line-height: 21px;
    padding-left: 2px;
}

.comp-tree {
    flex: 1;
    border: 1px solid #909090;
    border-right-width: 2px;
    border-bottom-width: 2px;
    background-color: #fff;
    padding-top: 2px;
}

.comp-root {
    position: relative;
    display: flex;
    align-items: center;
    gap: 5px;
    height: 16px;
    padding-left: 23px;
}

.comp-root .exp.open {
    left: 9px;
    top: 3px;
}

.comp-leaf {
    height: 16px;
    margin-left: 31px;
    padding-left: 9px;
    position: relative;
    display: flex;
}

.comp-leaf::before {
    content: "";
    position: absolute;
    left: 0;
    top: -7px;
    width: 9px;
    height: 15px;
    border-left: 1px dotted #777;
    border-bottom: 1px dotted #777;
}

.comp-sel {
    width: 51px;
    height: 16px;
    display: flex;
    align-items: center;
    gap: 8px;
    padding-left: 4px;
    background-color: #2b65c4;
    color: #111;
}

.comp-sel svg {
    width: 12px;
    height: 12px;
}

.prop-pane {
    flex: 1;
    min-width: 0;
    display: flex;
    flex-direction: column;
    background-color: #fff;
    margin-top: 4px;
    margin-bottom: 2px;
    border-bottom: 2px solid #a8a8a8;
}

.tabs {
    flex: none;
    height: 19px;
    border-bottom: 1px solid #c8c8c8;
    background-color: #fff;
}

.tab {
    display: inline-block;
    height: 19px;
    width: 61px;
    background-color: #f6f6f6;
    border-right: 1px solid #c8c8c8;
    border-top: 1px solid #e4e4e4;
    text-align: center;
    line-height: 17px;
}

.prop-body {
    flex: 1;
    min-height: 0;
    display: flex;
    border-left: 1px solid #c8c8c8;
    border-right: 1px solid #c8c8c8;
    padding-right: 3px;
}

.prop-content {
    flex: 1;
    min-width: 0;
    display: flex;
    justify-content: space-between;
    align-items: flex-start;
    overflow: hidden;
    padding-top: 5px;
}

.prop-table {
    flex: none;
    width: 370px;
    table-layout: fixed;
    border-collapse: collapse;
    margin-top: 1px;
    line-height: 16px;
}

.c-no { width: 21px; }
.c-name { width: 191px; }
.c-val { width: 126px; }
.c-add { width: 31px; }

.prop-table th, .prop-table td {
    border: 1px solid #bfbfbf;
    height: 19px;
    padding: 0;
    overflow: hidden;
    white-space: nowrap;
    font-weight: normal;
}

.prop-table th {
    height: 22px;
    background-image: linear-gradient(#fff, #ececec);
    text-align: center;
}

.prop-table .th-val {
    background-image: linear-gradient(#fbe0ac, #f3c46c);
    color: #7a0a7a;
}

.prop-table td {
    padding-left: 2px;
}

.prop-table td:nth-child(2) {
    padding-left: 20px;
}

.prop-table td:nth-child(4) {
    padding-left: 0;
    text-align: center;
}

.prop-table .no {
    padding-left: 0;
    text-align: center;
    font-family: "Liberation Mono", monospace;
    font-size: 12px;
    letter-spacing: -1.2px;
    background-image: linear-gradient(#fff, #e6e6e6);
}

.prop-table .blue {
    color: #0000e0;
}

.prop-table .gray {
    color: #8c8c8c;
}

.prop-table td.child {
    padding-left: 30px;
    background-image: linear-gradient(#bfbfbf, #bfbfbf), linear-gradient(#bfbfbf, #bfbfbf);
    background-size: 1px 100%, 16px 1px;
    background-position: 8px 0, 9px 9px;
    background-repeat: no-repeat;
}

.prop-table td.group {
    padding-left: 2px;
}

.minus {
    display: inline-block;
    width: 13px;
    height: 13px;
    margin-right: 5px;
    vertical-align: -2px;
    border: 1px solid #aaa;
    background: linear-gradient(#333, #333) center / 7px 1px no-repeat;
}

.prop-table .sel .no {
    background-image: none;
    background-color: #fbd38a;
    color: #7a0a7a;
}

.prop-table .sel td:nth-child(2) {
    background-color: #0078d7;
    color: #fff;
}

.prop-table .sel td:nth-child(3) {
    background-color: #d5e8f8;
}

.chk {
    display: inline-block;
    width: 13px;
    height: 13px;
    border: 1px solid #444;
    background-color: #fff;
    vertical-align: -2px;
}

.bar {
    display: inline-block;
    width: 12px;
    text-align: center;
    font-weight: normal;
    letter-spacing: 0;
    margin: 0 1px;
}

/* 箍筋图 */
.stirrup {
    flex: none;
    width: 268px;
    height: 283px;
    border: 1px solid #505050;
    padding: 6px 7px 0 8px;
    background-image: linear-gradient(#b9c9d9, #d6e3f0 35px);
}

.stirrup-title {
    color: #999;
    height: 25px;
    line-height: 14px;
}

.stirrup-draw {
    display: block;
    width: 251px;
    height: 242px;
    outline: 1px solid #fff;
}

.draw-text {
    fill: #fff;
    font-family: "Liberation Serif", serif;
    font-size: 14px;
}

.draw-text.big {
    font-size: 17px;
}

.draw-title {
    fill: #fff;
    font-family: "Liberation Serif", "Noto Sans CJK SC", serif;
    font-size: 20px;
    letter-spacing: 1.2px;
}

.sort-a, .sort-z {
    font-family: "Liberation Serif", serif;
    font-size: 8px;
    font-weight: bold;
}

.sort-a {
    fill: #2b55a8;
}

.sort-z {
    fill: #b03030;
}

.prop-v {
    flex: none;
    width: 15px;
}

.prop-v .thumb {
    height: 285px;
    margin-top: 23px;
}

.prop-v .arr.dn::before {
    top: 245px;
}

/* 状态栏 */
.statusbar {
    flex: none;
    height: 20px;
    display: flex;
    gap: 2px;
    padding-top: 1px;
}

.cell {
    height: 18px;
    background-image: linear-gradient(#fff, #f4f4f4);
    border: 1px solid #ddd;
    line-height: 16px;
    padding-left: 1px;
    white-space: nowrap;
}

.c1 { width: 148px; }
.c2 { width: 78px; }
.c3 { width: 98px; }
.c4 { width: 48px; }
.c5 { flex: 1; }

/* 任务栏 */
.taskbar {
    flex: none;
    height: 40px;
    display: flex;
    background-color: #0a1114;
    color: #fff;
}

.start {
    width: 48px;
    flex: none;
    background-color: #000;
    display: flex;
    align-items: center;
    justify-content: center;
}

.start svg {
    width: 16px;
    height: 16px;
}

.task-search {
    width: 344px;
    flex: none;
    display: flex;
    align-items: center;
    padding-left: 9px;
    background-color: #333;
    color: #8c8c8c;
    font-size: 14px;
}

.cortana {
    width: 22px;
    height: 22px;
    margin-right: 5px;
}

.task-mic {
    width: 12px;
    height: 18px;
    margin-left: auto;
    margin-right: 15px;
}

.task-apps {
    flex: none;
    display: flex;
}

.task {
    width: 50px;
    height: 40px;
    display: flex;
    align-items: center;
    justify-content: center;
}

.task svg {
    width: 24px;
    height: 24px;
}

.task.pinned {
    position: relative;
}

.task.pinned::after {
    content: "";
    position: absolute;
    left: 5px;
    right: 1px;
    bottom: 0;
    height: 2px;
    background-color: #76b9ed;
}

.task.active {
    background-color: #3a3f42;
}

.tray {
    flex: 1;
    display: flex;
    align-items: center;
    position: relative;
    font-size: 12px;
    color: #e8e8e8;
}

.tray-link {
    margin-left: 57px;
}

.tray-cpu {
    width: 50px;
    margin-left: 17px;
    text-align: center;
    line-height: 18px;
    white-space: nowrap;
}

.tray-ic {
    flex: none;
    height: 16px;
}

.tray-up { width: 14px; margin-left: 24px; height: 10px; }
.tray-bat { width: 18px; margin-left: 10px; }
.tray-wifi { width: 15px; margin-left: 9px; }
.tray-vol { width: 16px; margin-left: 5px; }
.tray-kbd { width: 24px; margin-left: 10px; }
.tray-s { width: 15px; margin-left: 14px; height: 18px; }

.tray-ime {
    margin-left: 9px;
    font-size: 14px;
    color: #fff;
}

.tray-clock {
    width: 60px;
    margin-left: 11px;
    text-align: center;
    line-height: 20px;
    white-space: nowrap;
}

.tray-note {
    position: relative;
    margin-left: 20px;
}

.tray-note svg {
    display: block;
    width: 15px;
    height: 14px;
}

.tray-note b {
    position: absolute;
    left: 3px;
    top: 6px;
    width: 17px;
    height: 17px;
    border-radius: 50%;
    background-color: #444;
    border: 1px solid #222;
    color: #fff;
    font-size: 10px;
    line-height: 15px;
    text-align: center;
}

/* 浮层 */
.mark {
    position: absolute;
    border: 3px solid #f00;
}

.mark-a {
    left: 498px;
    top: 137px;
    width: 179px;
    height: 63px;
}

.mark-b {
    left: 526px;
    top: 380px;
    width: 144px;
    height: 54px;
}

.mark-c {
    left: 491px;
    top: 151px;
    width: 4px;
    height: 17px;
    border: 0;
    background-color: #f00;
}

.badge {
    position: absolute;
    left: 886px;
    top: -28px;
    width: 46px;
    height: 46px;
    border-radius: 50%;
    background-color: #3cb85c;
    border: 1px solid #d8d8d8;
    box-shadow: 0 1px 3px rgba(0, 0, 0, 0.5);
    color: #fff;
    font-size: 11px;
    font-weight: bold;
    text-align: center;
}

.badge span {
    position: absolute;
    left: 0;
    right: 0;
    top: 27px;
    line-height: 14px;
}

.sogou {
    position: absolute;
    left: 1160px;
    top: 701px;
    width: 206px;
    height: 27px;
    display: flex;
    align-items: center;
    color: #1a78c8;
}

.sogou svg {
    width: 17px;
    height: 17px;
    flex: none;
    margin-right: 5px;
}

.sogou .sg-logo {
    width: 25px;
    height: 25px;
    margin-right: 8px;
}

.sg-zh {
    font-size: 15px;
    font-weight: bold;
    margin-right: 10px;
}

.sg-punc {
    font-size: 14px;
    font-weight: bold;
    width: 19px;
}
```
